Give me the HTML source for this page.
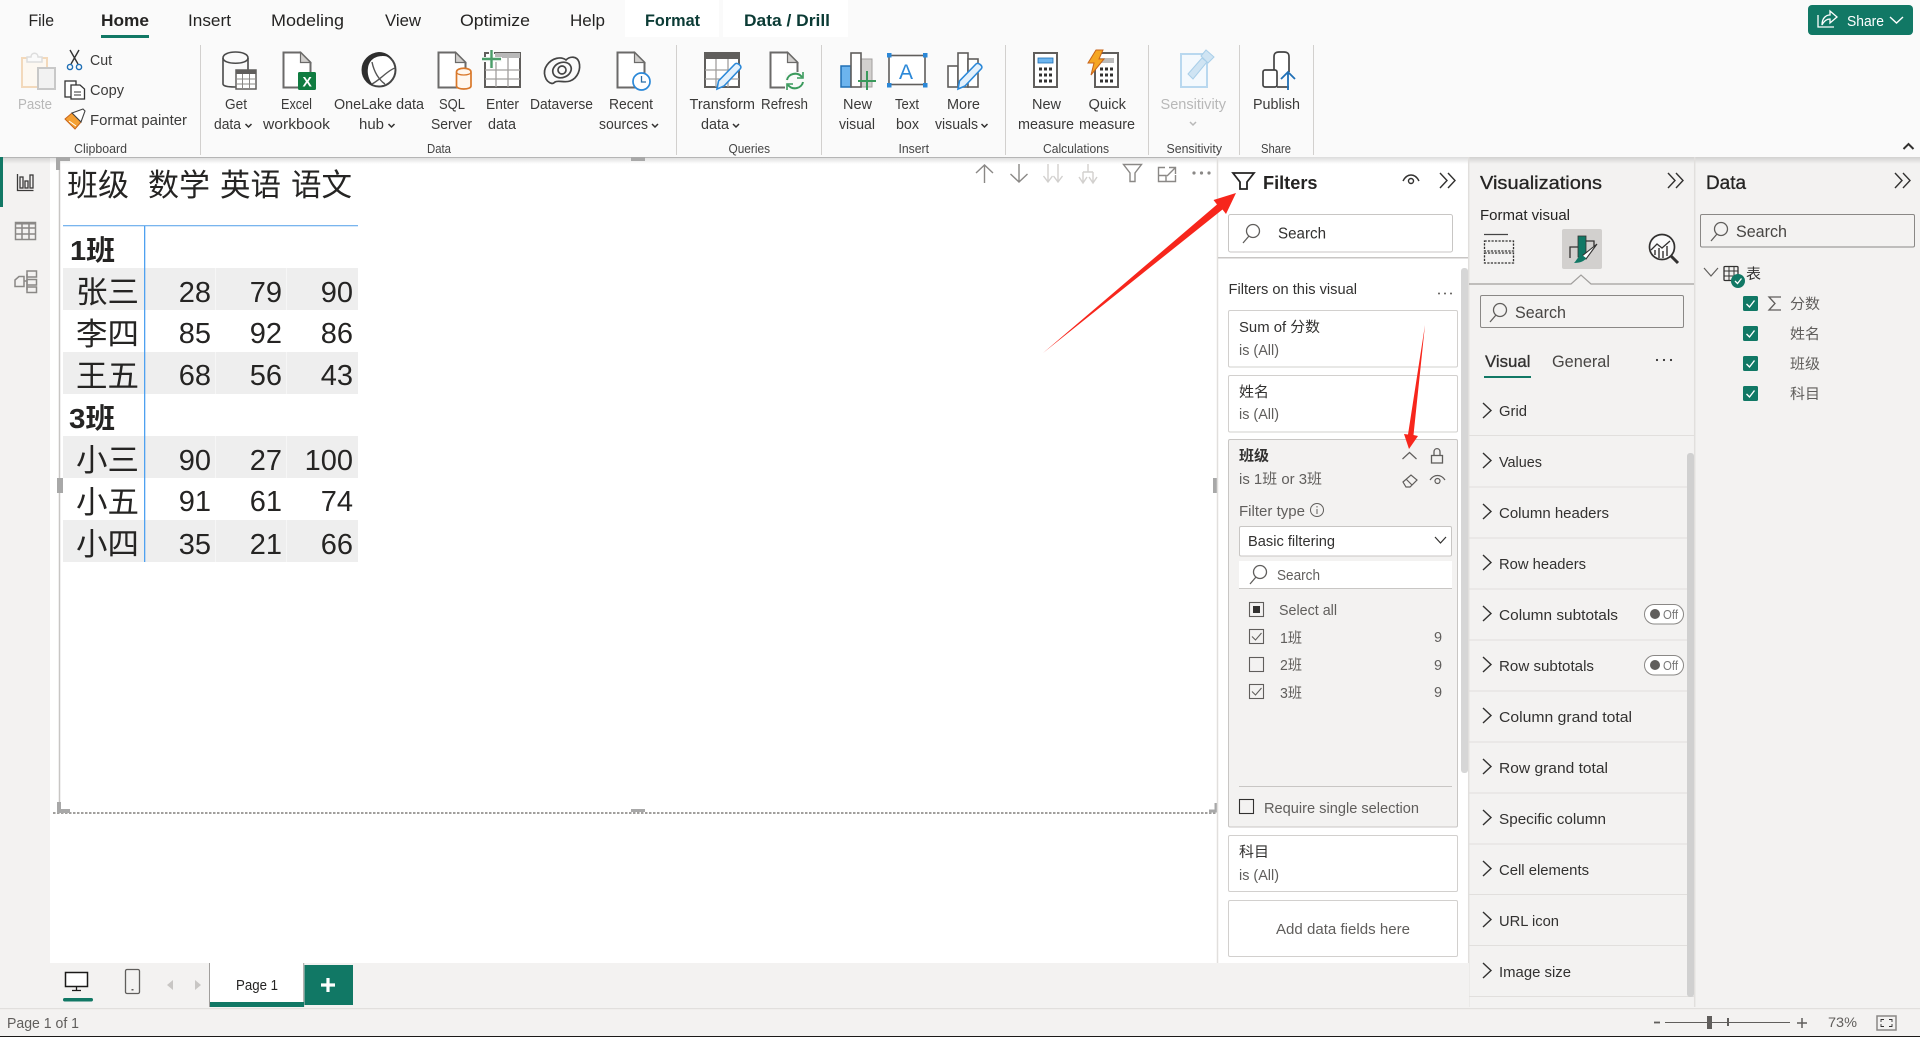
<!DOCTYPE html>
<html><head><meta charset="utf-8"><title>Power BI Desktop</title>
<style>
html,body{margin:0;padding:0;width:1920px;height:1037px;overflow:hidden;background:#f3f2f1}
svg{display:block;position:absolute;left:0;top:0;font-family:"Liberation Sans","Noto Sans CJK SC",sans-serif}
text{fill:#323130;font-size:15px;white-space:pre}
.t{font-size:17px;fill:#252423}
.b{font-weight:bold}
.r{font-size:15px;fill:#3b3a39}
.g{font-size:12.5px;fill:#444}
.d{fill:#b8b8b8}
.p{font-size:14.5px;fill:#323130}
.h{font-size:19px;fill:#252423}
.tb{font-size:30px;fill:#252423}
.nm{font-size:31px;fill:#252423}
.n{font-size:29px;fill:#252423;text-anchor:end}
.s{font-size:15.5px;fill:#323130}
.ic{fill:none;stroke:#6b6a69;stroke-width:2}
.th{fill:none;stroke:#323130;stroke-width:1.3}
.cv{fill:none;stroke:#323130;stroke-width:1.4}
.dv{stroke:#d2d0ce;stroke-width:1}
.sp{stroke:#e1dfdd;stroke-width:1.5}
</style></head><body>
<svg width="1920" height="1037" viewBox="0 0 1920 1037" xmlns="http://www.w3.org/2000/svg">
<defs>
<linearGradient id="sh" x1="0" y1="0" x2="0" y2="1"><stop offset="0" stop-color="#000" stop-opacity=".14"/><stop offset="1" stop-color="#000" stop-opacity="0"/></linearGradient>
<g id="doc"><path d="M0 0H17L27 10V35H0Z" fill="#fff" stroke="#6b6a69" stroke-width="2"/><path d="M17 0V10H27Z" fill="#d2d0ce" stroke="#6b6a69" stroke-width="1.200"/></g>
<g id="chev"><path d="M0 0L3 3L6 0" fill="none" stroke="#323130" stroke-width="1.5"/></g>
<g id="mag"><circle cx="11" cy="7" r="6.5" fill="none" stroke="#605e5c" stroke-width="1.3"/><path d="M7 12L1 19" stroke="#605e5c" stroke-width="1.3"/></g>
<g id="rc"><path d="M0 0L8 7.5L0 15" fill="none" stroke="#323130" stroke-width="1.4"/></g>
<g id="dbl"><path d="M0 0L7 7.5L0 15M8 0L15 7.5L8 15" fill="none" stroke="#323130" stroke-width="1.4"/></g>
<g id="ck"><rect width="15" height="15" rx="1.5" fill="#117865"/><path d="M3.5 8L6.5 11L11.5 4.5" fill="none" stroke="#fff" stroke-width="1.4"/></g>
</defs>

<!-- base -->
<rect width="1920" height="1037" fill="#f3f2f1"/>
<rect x="50" y="157" width="1168" height="806" fill="#fff"/>
<rect x="1218" y="157" width="250" height="806" fill="#fff"/>

<!-- ribbon -->
<rect width="1920" height="157" fill="#fafafa"/>
<rect y="157" width="1920" height="7" fill="url(#sh)"/>
<rect y="157" width="1218" height="1" fill="#b5b5b5"/>
<rect x="625" width="94" height="37" fill="#fff"/>
<rect x="723" width="125" height="37" fill="#fff"/>

<text class="t" x="28.5" y="26" textLength="25.5" lengthAdjust="spacingAndGlyphs">File</text>
<text class="t b" x="101" y="26" textLength="48" lengthAdjust="spacingAndGlyphs">Home</text>
<rect x="101" y="35" width="48" height="3" fill="#117865"/>
<text class="t" x="188" y="26" textLength="43" lengthAdjust="spacingAndGlyphs">Insert</text>
<text class="t" x="271" y="26" textLength="73" lengthAdjust="spacingAndGlyphs">Modeling</text>
<text class="t" x="385" y="26" textLength="36" lengthAdjust="spacingAndGlyphs">View</text>
<text class="t" x="460" y="26" textLength="70" lengthAdjust="spacingAndGlyphs">Optimize</text>
<text class="t" x="570" y="26" textLength="35" lengthAdjust="spacingAndGlyphs">Help</text>
<text class="t b" x="645" y="26" textLength="55" lengthAdjust="spacingAndGlyphs" style="fill:#0b3b35">Format</text>
<text class="t b" x="744" y="26" textLength="86" lengthAdjust="spacingAndGlyphs" style="fill:#0b3b35">Data / Drill</text>

<!-- share -->
<rect x="1808" y="5" width="105" height="30" rx="4" fill="#117865"/>
<path d="M1818 15V27H1834" fill="none" stroke="#fff" stroke-width="1.3"/>
<path d="M1822 25C1822 18 1826 15 1830 15V11L1837 17L1830 23V19C1827 19 1824 21 1822 25Z" fill="none" stroke="#fff" stroke-width="1.3"/>
<text x="1847" y="26" textLength="37" lengthAdjust="spacingAndGlyphs" style="fill:#fff;font-size:14.5px">Share</text>
<path d="M1890 17L1896.5 23L1903 17" fill="none" stroke="#fff" stroke-width="1.4"/>
<path d="M1903.5 149L1908.5 144L1913.5 149" fill="none" stroke="#323130" stroke-width="2"/>

<!-- dividers -->
<g class="dv"><path d="M200.5 45V155M676.5 45V155M821.5 45V155M1005.5 45V155M1148.5 45V155M1239.5 45V155M1313.5 45V155"/></g>

<!-- clipboard -->
<rect x="22" y="58" width="25" height="29" fill="#fdf8f1" stroke="#f3d9bb" stroke-width="2"/>
<path d="M27 62V57H31C31 52 38 52 38 57H42V62Z" fill="#fafafa" stroke="#ddd" stroke-width="1.5"/>
<rect x="38" y="68" width="17" height="21" fill="#f2f2f2" stroke="#c8c8c8" stroke-width="2"/>
<path d="M70 50L78 64M79 50L71 64" stroke="#333" stroke-width="1.4"/>
<circle cx="70" cy="67" r="2.6" fill="none" stroke="#1f6fb5" stroke-width="1.4"/><circle cx="79" cy="67" r="2.6" fill="none" stroke="#1f6fb5" stroke-width="1.4"/>
<rect x="65" y="81" width="11" height="16" fill="#fff" stroke="#333" stroke-width="1.3"/>
<path d="M71 85H80L84.500 89V99H71Z" fill="#fff" stroke="#333" stroke-width="1.3"/><path d="M74 92H81M74 95H81" stroke="#333"/>
<path d="M65 119L72 113L81 122L75 129Z" fill="#f5a033" stroke="#c8641a" stroke-width="1"/><path d="M72 113L83 109L85 111L81 122Z" fill="#fff" stroke="#444" stroke-width="1.100"/><path d="M69 121L76 126" stroke="#fff"/>
<text class="r d" x="18" y="109" textLength="34" lengthAdjust="spacingAndGlyphs">Paste</text>
<text class="r" x="90" y="65" textLength="22" lengthAdjust="spacingAndGlyphs">Cut</text>
<text class="r" x="90" y="95" textLength="34" lengthAdjust="spacingAndGlyphs">Copy</text>
<text class="r" x="90" y="125" textLength="97" lengthAdjust="spacingAndGlyphs">Format painter</text>
<text class="g" x="74" y="153" textLength="53" lengthAdjust="spacingAndGlyphs">Clipboard</text>

<!-- data group -->
<path d="M223 58C223 50 248 50 248 58V84C248 87 240 87 235 87C228 87 223 86 223 84Z" fill="#fafafa" stroke="#4a4a4a" stroke-width="1.600"/><path d="M223 58C223 65 248 65 248 58" fill="none" stroke="#4a4a4a" stroke-width="1.600"/>
<rect x="236" y="70" width="20" height="19" fill="#fff" stroke="#605e5c" stroke-width="1.5"/><rect x="236" y="70" width="20" height="4" fill="#605e5c"/><path d="M242.500 74V89M249.500 74V89M236 79H256M236 84H256" stroke="#8a8886"/>

<use href="#doc" x="283.500" y="52.500"/>
<rect x="298" y="72" width="18" height="18" rx="1.500" fill="#107c41"/>
<text x="302.500" y="86.500" style="fill:#fff;font-size:14px;font-weight:bold">X</text>

<circle cx="379" cy="70" r="16.500" fill="#fff" stroke="#444" stroke-width="2"/>
<path d="M379 52C368 53 361 62 362 71C362 78 367 84 373 85C369 80 367 74 368 68C369 61 374 56 383 56C388 56 392 58 393 60C390 55 385 52 379 52Z" fill="#2e2e2e"/>
<path d="M372 62C374 72 379 80 385 84M395 68C388 70 380 80 372 84" fill="none" stroke="#555" stroke-width="1.400"/>

<use href="#doc" x="438.500" y="52.500"/>
<path d="M456.500 72C456.500 67 471 67 471 72V86C471 90 456.500 90 456.500 86Z" fill="#fff7ee" stroke="#d9782a" stroke-width="1.700"/><path d="M456.500 72C456.500 76 471 76 471 72" fill="none" stroke="#d9782a" stroke-width="1.200"/>

<rect x="485" y="53" width="35" height="34" fill="#fff" stroke="#605e5c" stroke-width="2"/><rect x="495" y="53" width="25" height="5" fill="#b8b8b8"/>
<path d="M496 58V87M508 58V87M485 70H520M485 79H520" stroke="#a19f9d" stroke-width="1.300"/>
<rect x="481" y="57" width="21" height="5" fill="#fafafa"/><rect x="489" y="49" width="5" height="20" fill="#fafafa"/>
<path d="M491.500 50V68M482 59H501" stroke="#4a9d68" stroke-width="2.400"/>

<g fill="none" stroke="#444" stroke-width="1.700"><ellipse cx="562" cy="70" rx="9.500" ry="7.500" transform="rotate(-22 562 70)"/><circle cx="562" cy="70" r="4"/><path d="M552 83.500C545 82 542 72 547 65C552 58 561 56 566 60C570 56 577 56 579 62C581 69 578 78 570 81C565 83 558 80 555 82C554 83 553 83.500 552 83.500Z"/></g>

<use href="#doc" x="617.500" y="52.500"/>
<circle cx="641.500" cy="81.500" r="8.500" fill="#fff" stroke="#2b88d8" stroke-width="1.700"/><path d="M641.500 76V82H646" fill="none" stroke="#2b6ea8" stroke-width="1.300"/>

<text class="r" x="225" y="109" textLength="22" lengthAdjust="spacingAndGlyphs">Get</text>
<text class="r" x="214" y="129" textLength="27" lengthAdjust="spacingAndGlyphs">data</text><use href="#chev" x="245.500" y="124"/>
<text class="r" x="281" y="109" textLength="31" lengthAdjust="spacingAndGlyphs">Excel</text>
<text class="r" x="263" y="129" textLength="67" lengthAdjust="spacingAndGlyphs">workbook</text>
<text class="r" x="334" y="109" textLength="90" lengthAdjust="spacingAndGlyphs">OneLake data</text>
<text class="r" x="359" y="129" textLength="25" lengthAdjust="spacingAndGlyphs">hub</text><use href="#chev" x="388.500" y="124"/>
<text class="r" x="439" y="109" textLength="26" lengthAdjust="spacingAndGlyphs">SQL</text>
<text class="r" x="431" y="129" textLength="41" lengthAdjust="spacingAndGlyphs">Server</text>
<text class="r" x="486" y="109" textLength="33" lengthAdjust="spacingAndGlyphs">Enter</text>
<text class="r" x="488" y="129" textLength="28" lengthAdjust="spacingAndGlyphs">data</text>
<text class="r" x="530" y="109" textLength="63" lengthAdjust="spacingAndGlyphs">Dataverse</text>
<text class="r" x="609" y="109" textLength="44" lengthAdjust="spacingAndGlyphs">Recent</text>
<text class="r" x="599" y="129" textLength="49" lengthAdjust="spacingAndGlyphs">sources</text><use href="#chev" x="652" y="124"/>
<text class="g" x="427" y="153" textLength="24" lengthAdjust="spacingAndGlyphs">Data</text>

<!-- queries -->
<rect x="705" y="53" width="34" height="34" fill="#fff" stroke="#605e5c" stroke-width="2"/><rect x="705" y="53" width="34" height="6" fill="#605e5c"/>
<path d="M716 59V87M728 59V87M705 70H739M705 79H739" stroke="#a19f9d" stroke-width="1.300"/>
<path d="M717 89L718.500 81L735 64C737 62 742.500 66 740.500 68.500L724 86Z" fill="#e4f1fc" stroke="#2b88d8" stroke-width="1.600"/>
<use href="#doc" x="770.500" y="52.500"/>
<rect x="785" y="72" width="20" height="18" fill="#fafafa"/>
<path d="M787 80C788 74 797 71 802 77M803 82C802 88 793 91 788 85" fill="none" stroke="#3a9a5c" stroke-width="2"/><path d="M803 72V78H797M787 90V84H793" fill="none" stroke="#3a9a5c" stroke-width="1.600"/>
<text class="r" x="689.500" y="109" textLength="65.500" lengthAdjust="spacingAndGlyphs">Transform</text>
<text class="r" x="701" y="129" textLength="28" lengthAdjust="spacingAndGlyphs">data</text><use href="#chev" x="733" y="124"/>
<text class="r" x="761" y="109" textLength="47" lengthAdjust="spacingAndGlyphs">Refresh</text>
<text class="g" x="728.500" y="153" textLength="41.500" lengthAdjust="spacingAndGlyphs">Queries</text>

<!-- insert -->
<rect x="861" y="59" width="11" height="28" fill="#d2d0ce" stroke="#a19f9d"/>
<rect x="841" y="66" width="10" height="21" fill="#6cb4ee" stroke="#1f6fb5" stroke-width="1.500"/>
<rect x="851" y="53" width="10" height="34" fill="#fff" stroke="#605e5c" stroke-width="1.600"/>
<path d="M867 71V90M858 81H876" stroke="#3a9a5c" stroke-width="2"/>
<rect x="889" y="55.500" width="36" height="29" fill="#fff" stroke="#605e5c" stroke-width="1.600"/>
<g fill="#2b88d8"><rect x="887" y="53" width="4.500" height="4.500"/><rect x="923" y="53" width="4.500" height="4.500"/><rect x="887" y="83" width="4.500" height="4.500"/><rect x="923" y="83" width="4.500" height="4.500"/></g>
<text x="899" y="79" style="fill:#2b88d8;font-size:21px">A</text>
<g fill="#fff" stroke="#605e5c" stroke-width="1.600"><rect x="948" y="66" width="10" height="21"/><rect x="958" y="53" width="10" height="34"/><rect x="968" y="59" width="10" height="28"/></g>
<path d="M958 89L959.500 81L976 64C978 62 983.500 66 981.500 68.500L965 86Z" fill="#e4f1fc" stroke="#2b88d8" stroke-width="1.600"/>
<text class="r" x="843" y="109" textLength="29" lengthAdjust="spacingAndGlyphs">New</text>
<text class="r" x="839" y="129" textLength="36" lengthAdjust="spacingAndGlyphs">visual</text>
<text class="r" x="895" y="109" textLength="24" lengthAdjust="spacingAndGlyphs">Text</text>
<text class="r" x="896" y="129" textLength="23" lengthAdjust="spacingAndGlyphs">box</text>
<text class="r" x="947" y="109" textLength="33" lengthAdjust="spacingAndGlyphs">More</text>
<text class="r" x="935" y="129" textLength="43" lengthAdjust="spacingAndGlyphs">visuals</text><use href="#chev" x="981.500" y="124"/>
<text class="g" x="898.500" y="153" textLength="30.500" lengthAdjust="spacingAndGlyphs">Insert</text>

<!-- calculations -->
<rect x="1034" y="53" width="23" height="34" fill="#fff" stroke="#605e5c" stroke-width="2"/>
<rect x="1038" y="58" width="15" height="5" fill="#6cb4ee" stroke="#1f6fb5" stroke-width=".8"/>
<path d="M1039 69h3M1044 69h3M1049 69h3M1039 75h3M1044 75h3M1049 75h3M1039 81h3M1044 81h3M1049 81h3" stroke="#323130" stroke-width="3"/>
<rect x="1095" y="53" width="23" height="34" fill="#fff" stroke="#605e5c" stroke-width="2"/>
<rect x="1099" y="58" width="15" height="5" fill="#bbb"/>
<path d="M1100 69h3M1105 69h3M1110 69h3M1100 75h3M1105 75h3M1110 75h3M1100 81h3M1105 81h3M1110 81h3" stroke="#323130" stroke-width="3"/>
<path d="M1096 50H1103L1099 59H1104L1091 75L1094 63H1088Z" fill="#f5a623" stroke="#c8641a"/>
<text class="r" x="1032" y="109" textLength="29" lengthAdjust="spacingAndGlyphs">New</text>
<text class="r" x="1018" y="129" textLength="56" lengthAdjust="spacingAndGlyphs">measure</text>
<text class="r" x="1088.500" y="109" textLength="37.500" lengthAdjust="spacingAndGlyphs">Quick</text>
<text class="r" x="1079" y="129" textLength="56" lengthAdjust="spacingAndGlyphs">measure</text>
<text class="g" x="1043" y="153" textLength="66" lengthAdjust="spacingAndGlyphs">Calculations</text>

<!-- sensitivity -->
<rect x="1181" y="54" width="26" height="33" fill="#f4f9fd" stroke="#b9d8ef" stroke-width="2"/>
<path d="M1188 74L1202 58L1207 62L1193 79Z" fill="#cfe4f3" stroke="#a9cfe9"/><path d="M1201 56L1206 50L1214 57L1208 63Z" fill="#cfe4f3" stroke="#a9cfe9"/>
<text class="r d" x="1160.500" y="109" textLength="65.500" lengthAdjust="spacingAndGlyphs">Sensitivity</text>
<path d="M1190 122L1193 125L1196 122" fill="none" stroke="#b8b8b8" stroke-width="1.500"/>
<text class="g" x="1166.500" y="153" textLength="55.500" lengthAdjust="spacingAndGlyphs">Sensitivity</text>

<!-- publish -->
<g fill="#fff" stroke="#444" stroke-width="1.700"><path d="M1274 76V57C1274 53 1276 52 1279 52H1284C1287 52 1289 53 1289 57V72"/><rect x="1263" y="70" width="14" height="17" rx="2"/><path d="M1277 87H1289"/></g>
<path d="M1288 90V72M1281 79L1288 72L1295 79" fill="none" stroke="#1f6fb5" stroke-width="1.800"/>
<text class="r" x="1253" y="109" textLength="47" lengthAdjust="spacingAndGlyphs">Publish</text>
<text class="g" x="1261" y="153" textLength="30" lengthAdjust="spacingAndGlyphs">Share</text>

<!-- left rail -->
<rect x="0" y="157" width="3" height="50" fill="#117865"/>
<g fill="none" stroke="#3b3a39" stroke-width="1.300"><path d="M17.500 174V190.500H33.500"/><rect x="20" y="177" width="3" height="11"/><rect x="25" y="181" width="3" height="7"/><rect x="30" y="175" width="3" height="13"/></g>
<g fill="none" stroke="#8a8886" stroke-width="1.500"><rect x="15.500" y="222.500" width="20" height="17"/><path d="M15.500 228H35.500M15.500 234H35.500M22 223V239M29 223V239"/></g>
<rect x="15.500" y="222" width="20" height="2.500" fill="#8a8886"/>
<g fill="none" stroke="#8a8886" stroke-width="1.500"><path d="M24 276.500H19L15 280V286.500H24Z"/><rect x="27" y="271" width="9.500" height="6"/><rect x="27" y="279.500" width="9.500" height="5.500"/><rect x="27" y="287" width="9.500" height="5.500"/><path d="M24 281H27M27 274V290"/></g>

<!-- visual frame -->
<path d="M59.500 157V812" stroke="#c8c6c4" stroke-width="1.500"/>
<path d="M1217.500 157V812" stroke="#c8c6c4" stroke-width="1"/>
<path d="M53 813H1217" stroke="#a19f9d" stroke-width="2" stroke-dasharray="2.500 1.500"/>
<path d="M58 170V159H70" fill="none" stroke="#a8a8a8" stroke-width="4"/>
<path d="M59 802V811H70" fill="none" stroke="#a8a8a8" stroke-width="4"/>
<rect x="57" y="478" width="6" height="15" fill="#a8a8a8"/>
<rect x="1213" y="478" width="5" height="15" fill="#a8a8a8"/>
<rect x="631" y="157" width="14" height="4" fill="#a8a8a8"/>
<rect x="631" y="809" width="14" height="3" fill="#a8a8a8"/>
<path d="M1209 811H1216V803" fill="none" stroke="#a8a8a8" stroke-width="3"/>

<!-- visual toolbar -->
<g fill="none" stroke="#8a8886" stroke-width="1.400">
<path d="M984.500 183V165M976 173L984.500 165L993 173"/>
<path d="M1019 164V182M1010.500 174L1019 182L1027.500 174"/>
<path d="M1123.500 164.500H1141.500L1135 173V181.500H1130V173Z"/>
<path d="M1165 167.500H1158.500V181.500H1175.500V175M1169 167.500H1175.500V174M1175.500 167.500L1167 176M1158.500 175.500H1166V181.500"/>
</g>
<g fill="none" stroke="#d2d0ce" stroke-width="1.400">
<path d="M1048 164V182M1043.500 176L1048 182L1052.500 176M1058 164V182M1053.500 176L1058 182L1062.500 176"/>
<path d="M1088 164V172M1083 172H1093M1083 172V183M1093 172V183M1079 177L1083 183L1087 177M1089 177L1093 183L1097 177"/>
</g>
<g fill="#8a8886"><circle cx="1194" cy="173" r="1.600"/><circle cx="1201.500" cy="173" r="1.600"/><circle cx="1209" cy="173" r="1.600"/></g>

<!-- table -->
<g fill="#eeeeee"><rect x="63" y="268" width="295" height="42"/><rect x="63" y="352" width="295" height="42"/><rect x="63" y="436" width="295" height="42"/><rect x="63" y="520" width="295" height="42"/></g>
<path d="M215.500 268V310M286.500 268V310M215.500 352V394M286.500 352V394M215.500 436V478M286.500 436V478M215.500 520V562M286.500 520V562" stroke="#f6f6f6"/>
<rect x="63" y="225" width="295" height="1.300" fill="#79b5ee"/>
<rect x="144" y="226" width="1.300" height="336" fill="#4ea1f0"/>
<text class="nm" x="67" y="196" textLength="62" lengthAdjust="spacingAndGlyphs">班级</text>
<text class="nm" x="148" y="196" textLength="62" lengthAdjust="spacingAndGlyphs">数学</text>
<text class="nm" x="220" y="196" textLength="61" lengthAdjust="spacingAndGlyphs">英语</text>
<text class="nm" x="291" y="196" textLength="61" lengthAdjust="spacingAndGlyphs">语文</text>
<text class="b" x="70" y="260" textLength="45" lengthAdjust="spacingAndGlyphs" style="font-size:28px;fill:#252423">1班</text>
<text class="b" x="69" y="428" textLength="46" lengthAdjust="spacingAndGlyphs" style="font-size:28px;fill:#252423">3班</text>
<text class="nm" x="76" y="303" textLength="63" lengthAdjust="spacingAndGlyphs">张三</text>
<text class="nm" x="76" y="345" textLength="63" lengthAdjust="spacingAndGlyphs">李四</text>
<text class="nm" x="76" y="387" textLength="63" lengthAdjust="spacingAndGlyphs">王五</text>
<text class="nm" x="76" y="471" textLength="63" lengthAdjust="spacingAndGlyphs">小三</text>
<text class="nm" x="76" y="513" textLength="63" lengthAdjust="spacingAndGlyphs">小五</text>
<text class="nm" x="76" y="555" textLength="63" lengthAdjust="spacingAndGlyphs">小四</text>
<text class="n" x="211" y="302">28</text><text class="n" x="282" y="302">79</text><text class="n" x="353" y="302">90</text>
<text class="n" x="211" y="343">85</text><text class="n" x="282" y="343">92</text><text class="n" x="353" y="343">86</text>
<text class="n" x="211" y="385">68</text><text class="n" x="282" y="385">56</text><text class="n" x="353" y="385">43</text>
<text class="n" x="211" y="470">90</text><text class="n" x="282" y="470">27</text><text class="n" x="353" y="470">100</text>
<text class="n" x="211" y="511">91</text><text class="n" x="282" y="511">61</text><text class="n" x="353" y="511">74</text>
<text class="n" x="211" y="554">35</text><text class="n" x="282" y="554">21</text><text class="n" x="353" y="554">66</text>

<!-- pane separators -->
<path class="sp" d="M1217.500 157V963M1468.700 157V1007M1694.700 157V1007"/>

<!-- filters pane -->
<path d="M1233 173H1254L1247 182V189H1240V182Z" fill="none" stroke="#252423" stroke-width="1.800"/>
<text class="h b" x="1263" y="189" textLength="54.500" lengthAdjust="spacingAndGlyphs" style="font-size:18px">Filters</text>
<path d="M1403 181C1407 173 1415 173 1419 181" fill="none" stroke="#323130" stroke-width="1.400"/><circle cx="1411" cy="181" r="2.500" fill="none" stroke="#323130" stroke-width="1.400"/>
<use href="#dbl" x="1440" y="173"/>
<rect x="1228.500" y="214.500" width="224" height="37.500" rx="2" fill="#fff" stroke="#c8c6c4"/>
<use href="#mag" x="1242" y="224"/>
<text class="s" x="1278" y="238.500" textLength="48" lengthAdjust="spacingAndGlyphs">Search</text>
<rect x="1218" y="257" width="250" height="1.500" fill="#c8c6c4"/>
<rect x="1461" y="268" width="7" height="505" rx="3" fill="#d6d6d6"/>
<text class="p" x="1228.500" y="294" textLength="128.500" lengthAdjust="spacingAndGlyphs">Filters on this visual</text>
<g fill="#605e5c"><circle cx="1439" cy="293.500" r="1"/><circle cx="1445" cy="293.500" r="1"/><circle cx="1451" cy="293.500" r="1"/></g>

<rect x="1228.500" y="310.500" width="229" height="56.500" rx="1.500" fill="#fff" stroke="#d2d0ce"/>
<text class="p" x="1239" y="332" textLength="81" lengthAdjust="spacingAndGlyphs">Sum of 分数</text>
<text class="p" x="1239" y="355" textLength="40" lengthAdjust="spacingAndGlyphs" style="fill:#605e5c">is (All)</text>
<rect x="1228.500" y="375.500" width="229" height="56.500" rx="1.500" fill="#fff" stroke="#d2d0ce"/>
<text class="p" x="1239" y="397" textLength="30" lengthAdjust="spacingAndGlyphs">姓名</text>
<text class="p" x="1239" y="419" textLength="40" lengthAdjust="spacingAndGlyphs" style="fill:#605e5c">is (All)</text>

<rect x="1228.500" y="439.500" width="229" height="387.500" rx="1.500" fill="#f3f2f1" stroke="#c8c6c4"/>
<text class="p b" x="1239" y="461" textLength="30" lengthAdjust="spacingAndGlyphs">班级</text>
<text class="p" x="1239" y="484" textLength="83" lengthAdjust="spacingAndGlyphs" style="fill:#605e5c">is 1班 or 3班</text>
<path d="M1402.500 459L1409.500 452.500L1416.500 459" fill="none" stroke="#605e5c" stroke-width="1.200"/>
<rect x="1431.500" y="455.500" width="11" height="7.500" fill="none" stroke="#605e5c" stroke-width="1.300"/><path d="M1434 455V452C1434 447.500 1440 447.500 1440 452V455" fill="none" stroke="#605e5c" stroke-width="1.300"/>
<path d="M1403 482L1411 475L1417 480L1410 487H1406ZM1406 479L1412 485" fill="none" stroke="#605e5c" stroke-width="1.200"/>
<path d="M1430 480C1434 474 1441 474 1445 480" fill="none" stroke="#605e5c" stroke-width="1.200"/><circle cx="1437.500" cy="481" r="2.500" fill="none" stroke="#605e5c" stroke-width="1.200"/>
<text class="p" x="1239" y="516" textLength="66" lengthAdjust="spacingAndGlyphs" style="fill:#605e5c">Filter type</text>
<circle cx="1317" cy="510" r="6.500" fill="none" stroke="#605e5c"/><path d="M1317 509V514M1317 506V507.500" stroke="#605e5c"/>
<rect x="1239.500" y="526.500" width="212" height="29.500" rx="1.500" fill="#fff" stroke="#c8c6c4"/>
<text class="p" x="1248" y="546" textLength="87" lengthAdjust="spacingAndGlyphs">Basic filtering</text>
<path d="M1435 537L1440.500 543L1446 537" fill="none" stroke="#323130" stroke-width="1.200"/>
<rect x="1239" y="561" width="213" height="27" fill="#fff"/><rect x="1239" y="588" width="213" height="1" fill="#c8c6c4"/>
<use href="#mag" x="1249" y="565" style="stroke:#323130"/>
<text class="p" x="1277" y="580" textLength="43" lengthAdjust="spacingAndGlyphs" style="fill:#605e5c">Search</text>
<g fill="none" stroke="#605e5c" stroke-width="1.100">
<rect x="1249.500" y="602.500" width="14" height="14"/>
<rect x="1249.500" y="629.500" width="14" height="14"/>
<rect x="1249.500" y="657.500" width="14" height="14"/>
<rect x="1249.500" y="684.500" width="14" height="14"/>
<path d="M1252 636.500L1255.500 640L1261.500 633M1252 691.500L1255.500 695L1261.500 688"/>
<rect x="1239.500" y="799.500" width="14" height="14" stroke="#323130"/>
</g>
<rect x="1253" y="606" width="7" height="7" fill="#323130"/>
<text class="p" x="1279" y="615" textLength="58" lengthAdjust="spacingAndGlyphs" style="fill:#605e5c">Select all</text>
<text class="p" x="1280" y="643" textLength="22" lengthAdjust="spacingAndGlyphs" style="fill:#605e5c">1班</text>
<text class="p" x="1280" y="670" textLength="22" lengthAdjust="spacingAndGlyphs" style="fill:#605e5c">2班</text>
<text class="p" x="1280" y="698" textLength="22" lengthAdjust="spacingAndGlyphs" style="fill:#605e5c">3班</text>
<text class="p" x="1434" y="642" style="fill:#605e5c">9</text><text class="p" x="1434" y="670" style="fill:#605e5c">9</text><text class="p" x="1434" y="697" style="fill:#605e5c">9</text>
<rect x="1239" y="786" width="213" height="1" fill="#c8c6c4"/>
<text class="p" x="1264" y="813" textLength="155" lengthAdjust="spacingAndGlyphs" style="fill:#605e5c">Require single selection</text>

<rect x="1228.500" y="835.500" width="229" height="56" rx="1.500" fill="#fff" stroke="#d2d0ce"/>
<text class="p" x="1239" y="857" textLength="30" lengthAdjust="spacingAndGlyphs">科目</text>
<text class="p" x="1239" y="880" textLength="40" lengthAdjust="spacingAndGlyphs" style="fill:#605e5c">is (All)</text>
<rect x="1228.500" y="900.500" width="229" height="56" rx="1.500" fill="#fff" stroke="#d2d0ce"/>
<text class="p" x="1276" y="934" textLength="134" lengthAdjust="spacingAndGlyphs" style="fill:#605e5c">Add data fields here</text>

<!-- visualizations pane -->
<text class="h b" x="1480" y="189" textLength="122" lengthAdjust="spacingAndGlyphs" style="font-size:18.500px;font-weight:normal;stroke:#252423;stroke-width:.3">Visualizations</text>
<use href="#dbl" x="1668" y="173"/>
<text class="p" x="1480" y="220" textLength="90" lengthAdjust="spacingAndGlyphs" style="fill:#252423">Format visual</text>
<path d="M1484 234.500H1508" stroke="#444" stroke-width="1.300"/>
<g fill="none" stroke="#323130" stroke-width="1.300" stroke-dasharray="2.200 1.300"><rect x="1484.500" y="241" width="29" height="10"/><rect x="1484.500" y="253" width="29" height="10"/></g>
<rect x="1562" y="229" width="40" height="40" rx="2" fill="#d2d0ce"/>
<path d="M1570 258V247H1578M1586 241H1594V246" fill="none" stroke="#323130" stroke-width="1.300"/>
<rect x="1578" y="236" width="8" height="21" fill="#117865" stroke="#323130" stroke-width=".8"/>
<path d="M1597 244L1586 259L1582 256Z" fill="#fff" stroke="#323130" stroke-width="1.100"/>
<path d="M1574 263C1580 263 1585 261 1586 258L1582 255C1578 256 1577 260 1574 263Z" fill="#117865"/>
<circle cx="1662" cy="247" r="12.500" fill="#fafafa" stroke="#323130" stroke-width="1.700"/>
<path d="M1651 250L1657 244L1662 248L1670 241" fill="none" stroke="#323130" stroke-width="1.300"/>
<path d="M1655 255V250M1659 258V248M1663 258V251M1667 256V246" stroke="#323130" stroke-width="1.400"/>
<path d="M1671 256L1678 263" stroke="#323130" stroke-width="3"/>
<path d="M1469 284H1571L1581 275L1591 284H1694" fill="none" stroke="#a19f9d" stroke-width="1.200"/>
<rect x="1480.500" y="295.500" width="203" height="32" rx="1.500" fill="#f3f2f1" stroke="#8a8886"/>
<use href="#mag" x="1489" y="303"/>
<text class="s" x="1515" y="318" textLength="51" lengthAdjust="spacingAndGlyphs" style="font-size:16.500px;fill:#484644">Search</text>
<text class="s b" x="1485" y="367" textLength="45.500" lengthAdjust="spacingAndGlyphs" style="font-size:16.500px;font-weight:normal;stroke:#323130;stroke-width:.3">Visual</text>
<rect x="1484" y="376" width="47" height="2" fill="#117865"/>
<text class="s" x="1552" y="367" textLength="58" lengthAdjust="spacingAndGlyphs" style="font-size:16.500px;fill:#484644">General</text>
<g fill="#323130"><circle cx="1657" cy="360" r="1.100"/><circle cx="1664" cy="360" r="1.100"/><circle cx="1671" cy="360" r="1.100"/></g>

<g stroke="#e1dfdd" stroke-width="1"><path d="M1469 435.500H1694M1469 487H1694M1469 538H1694M1469 589H1694M1469 640H1694M1469 691H1694M1469 742H1694M1469 793H1694M1469 844H1694M1469 894.500H1694M1469 945.500H1694M1469 996.500H1694"/></g>
<rect x="1687" y="453" width="7" height="544" rx="3" fill="#d0d0d0"/>
<use href="#rc" x="1483" y="403"/><text class="p" x="1499" y="416" textLength="28" lengthAdjust="spacingAndGlyphs">Grid</text>
<use href="#rc" x="1483" y="453"/><text class="p" x="1499" y="467" textLength="43" lengthAdjust="spacingAndGlyphs">Values</text>
<use href="#rc" x="1483" y="504"/><text class="p" x="1499" y="518" textLength="110" lengthAdjust="spacingAndGlyphs">Column headers</text>
<use href="#rc" x="1483" y="555"/><text class="p" x="1499" y="569" textLength="87" lengthAdjust="spacingAndGlyphs">Row headers</text>
<use href="#rc" x="1483" y="606"/><text class="p" x="1499" y="620" textLength="119" lengthAdjust="spacingAndGlyphs">Column subtotals</text>
<use href="#rc" x="1483" y="657"/><text class="p" x="1499" y="671" textLength="95" lengthAdjust="spacingAndGlyphs">Row subtotals</text>
<use href="#rc" x="1483" y="708"/><text class="p" x="1499" y="722" textLength="133" lengthAdjust="spacingAndGlyphs">Column grand total</text>
<use href="#rc" x="1483" y="759"/><text class="p" x="1499" y="773" textLength="109" lengthAdjust="spacingAndGlyphs">Row grand total</text>
<use href="#rc" x="1483" y="810"/><text class="p" x="1499" y="824" textLength="107" lengthAdjust="spacingAndGlyphs">Specific column</text>
<use href="#rc" x="1483" y="861"/><text class="p" x="1499" y="875" textLength="90" lengthAdjust="spacingAndGlyphs">Cell elements</text>
<use href="#rc" x="1483" y="912"/><text class="p" x="1499" y="926" textLength="60" lengthAdjust="spacingAndGlyphs">URL icon</text>
<use href="#rc" x="1483" y="963"/><text class="p" x="1499" y="977" textLength="72" lengthAdjust="spacingAndGlyphs">Image size</text>

<rect x="1644.500" y="604.500" width="39" height="19.500" rx="9.700" fill="#fff" stroke="#8a8886"/><circle cx="1655" cy="614" r="5" fill="#605e5c"/>
<text x="1663" y="619" textLength="15" lengthAdjust="spacingAndGlyphs" style="font-size:12.500px;fill:#777">Off</text>
<rect x="1644.500" y="655.500" width="39" height="19.500" rx="9.700" fill="#fff" stroke="#8a8886"/><circle cx="1655" cy="665" r="5" fill="#605e5c"/>
<text x="1663" y="670" textLength="15" lengthAdjust="spacingAndGlyphs" style="font-size:12.500px;fill:#777">Off</text>

<!-- data pane -->
<text class="h" x="1706" y="189" textLength="40" lengthAdjust="spacingAndGlyphs" style="stroke:#252423;stroke-width:.3">Data</text>
<use href="#dbl" x="1895" y="173"/>
<rect x="1700.500" y="214.500" width="214" height="32.500" rx="1.500" fill="#f3f2f1" stroke="#8a8886"/>
<use href="#mag" x="1710" y="222"/>
<text class="s" x="1736" y="237" textLength="51" lengthAdjust="spacingAndGlyphs" style="font-size:16.500px;fill:#484644">Search</text>
<path d="M1704 268L1711 276L1718 268" fill="none" stroke="#605e5c" stroke-width="1.200"/>
<rect x="1724" y="266.500" width="14" height="14" rx="1" fill="none" stroke="#323130" stroke-width="1.300"/><path d="M1724 271H1738M1724 276H1738M1729 267V281M1734 267V281" stroke="#323130"/>
<circle cx="1738" cy="281" r="7" fill="#117865"/><path d="M1735 281L1737.500 283.500L1741.500 278.500" fill="none" stroke="#fff" stroke-width="1.300"/>
<text class="p" x="1746" y="279" textLength="15" lengthAdjust="spacingAndGlyphs">表</text>
<use href="#ck" x="1743" y="296"/><use href="#ck" x="1743" y="326"/><use href="#ck" x="1743" y="356"/><use href="#ck" x="1743" y="386"/>
<path d="M1781 297H1769L1775 303.500L1769 310H1781" fill="none" stroke="#605e5c" stroke-width="1.300"/>
<text class="p" x="1790" y="309" textLength="30" lengthAdjust="spacingAndGlyphs" style="fill:#605e5c">分数</text>
<text class="p" x="1790" y="339" textLength="30" lengthAdjust="spacingAndGlyphs" style="fill:#605e5c">姓名</text>
<text class="p" x="1790" y="369" textLength="30" lengthAdjust="spacingAndGlyphs" style="fill:#605e5c">班级</text>
<text class="p" x="1790" y="399" textLength="30" lengthAdjust="spacingAndGlyphs" style="fill:#605e5c">科目</text>

<!-- tab bar -->
<rect x="0" y="963" width="1469" height="45" fill="#f3f2f1"/>
<rect x="65.500" y="972.500" width="22" height="14" fill="#fff" stroke="#1b1a19" stroke-width="1.500"/><path d="M76.500 987V990M72 990.500H81" stroke="#1b1a19" stroke-width="1.300"/>
<rect x="63" y="998" width="30" height="3.500" rx="1.700" fill="#117865"/>
<rect x="125.500" y="969.500" width="14" height="24" rx="1.500" fill="none" stroke="#605e5c" stroke-width="1.300"/><rect x="131.500" y="989" width="2" height="1.500" fill="#605e5c"/>
<path d="M173 980V990L167 985Z" fill="#c8c6c4"/><path d="M195 980V990L201 985Z" fill="#c8c6c4"/>
<rect x="209.500" y="963" width="94.500" height="44" fill="#fff"/>
<path d="M209.500 963V1007M303.700 963V1007" stroke="#a19f9d"/>
<rect x="210" y="1002" width="94" height="5" fill="#117865"/>
<text x="236" y="990" textLength="42" lengthAdjust="spacingAndGlyphs" style="font-size:14.500px;fill:#252423">Page 1</text>
<rect x="304.500" y="965" width="48.500" height="40" fill="#117865"/>
<path d="M328 978V992M321 985H335" stroke="#fff" stroke-width="3.200"/>

<!-- status bar -->
<rect y="1008" width="1920" height="1.200" fill="#e1dfdd"/>
<text x="7" y="1028" textLength="72" lengthAdjust="spacingAndGlyphs" style="font-size:14.500px;fill:#605e5c">Page 1 of 1</text>
<path d="M1654 1022.500H1660" stroke="#605e5c" stroke-width="1.800"/>
<path d="M1665 1022.500H1790" stroke="#605e5c" stroke-width="1"/>
<rect x="1707" y="1016" width="5" height="13" fill="#605e5c"/>
<rect x="1727" y="1018" width="2" height="8" fill="#605e5c"/>
<path d="M1802 1018V1028M1797 1023H1807" stroke="#605e5c" stroke-width="1.500"/>
<text x="1828" y="1027" textLength="29" lengthAdjust="spacingAndGlyphs" style="font-size:14px;fill:#605e5c">73%</text>
<rect x="1877" y="1016" width="19" height="14" fill="none" stroke="#8a8886" stroke-width="1.500"/>
<path d="M1881 1022V1019.500H1884M1889 1019.500H1892V1022M1892 1024V1026.500H1889M1884 1026.500H1881V1024" fill="none" stroke="#323130" stroke-width=".9"/>
<rect y="1036" width="1920" height="1" fill="#1b1a19"/>

<!-- red arrows -->
<path d="M1043 353L1217 204.500L1213.500 200L1236 193L1226 214L1222.500 209.500Z" fill="#f7261c"/>
<path d="M1425 325L1413.500 435L1418 436L1409 449L1404 434L1408 434.500Z" fill="#f7261c"/>
</svg>
</body></html>
